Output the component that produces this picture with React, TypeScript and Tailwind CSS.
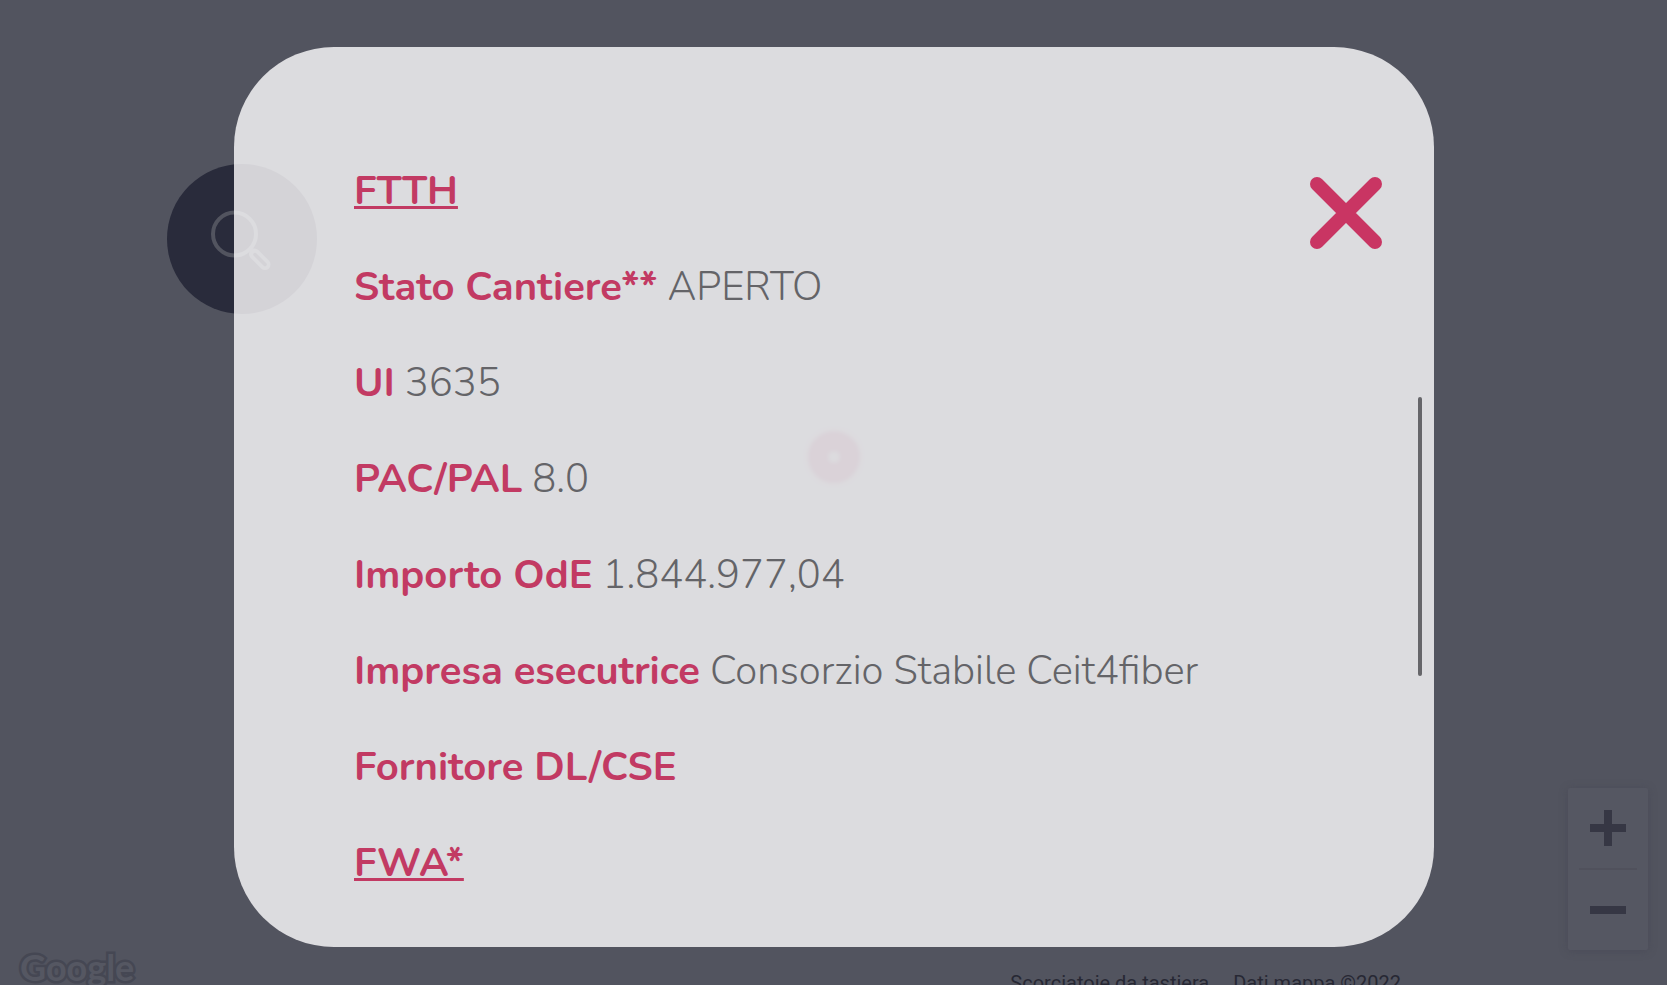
import React from "react";

type Row = { label: string; value?: string; heading?: boolean };

const rows: Row[] = [
  { label: "FTTH", heading: true },
  { label: "Stato Cantiere**", value: "APERTO" },
  { label: "UI", value: "3635" },
  { label: "PAC/PAL", value: "8.0" },
  { label: "Importo OdE", value: "1.844.977,04" },
  { label: "Impresa esecutrice", value: "Consorzio Stabile Ceit4fiber" },
  { label: "Fornitore DL/CSE" },
  { label: "FWA*", heading: true },
];

function MapLayer() {
  return (
    <div className="absolute inset-0">
      <button
        aria-label="Cerca"
        className="absolute left-[167px] top-[164px] size-[150px] rounded-full bg-[#292b3b]"
      >
        <svg viewBox="0 0 150 150" fill="none" stroke="#52545f" className="size-full">
          <circle cx="67.500" cy="70" r="21.500" strokeWidth="4" />
          <path d="M83 84l3 3" strokeWidth="4" />
          <path d="M87.500 90l10.500 10.500" strokeWidth="11" strokeLinecap="round" />
          <path d="M88 90.500l10 10" stroke="#292b3b" strokeWidth="3.500" strokeLinecap="round" />
        </svg>
      </button>

      <div className="absolute left-1/2 top-[431px] size-[52px] -translate-x-1/2 rounded-full border-[20px] border-[#46233c] blur-[2px]" />

      <div className="absolute bottom-[35px] right-[19px] flex w-20 flex-col items-center rounded-xs bg-[#555762] shadow-[0_1px_8px_rgba(60,61,75,0.350)]">
        <button aria-label="Zoom avanti" className="flex h-20 w-full items-center justify-center">
          <svg viewBox="0 0 36 36" className="size-9" fill="#363744">
            <path d="M14 0h8v14h14v8H22v14h-8V22H0v-8h14z" />
          </svg>
        </button>
        <div className="h-0.5 w-[58px] bg-[#50515c]" />
        <button aria-label="Zoom indietro" className="flex h-20 w-full items-center justify-center">
          <svg viewBox="0 0 36 36" className="size-9" fill="#363744">
            <path d="M0 14h36v8H0z" />
          </svg>
        </button>
      </div>

      <a
        href="#google"
        className="absolute -bottom-1 left-5 font-['Lato',sans-serif] text-[36px] leading-[44px] font-bold text-[#555762] [-webkit-text-stroke:5px_#454753] [paint-order:stroke_fill]"
      >
        Google
      </a>
      <div className="absolute -bottom-2.5 right-[266px] flex gap-6 font-['Roboto',sans-serif] text-[20px] leading-6 text-[#272834]">
        <a href="#tastiera">Scorciatoie da tastiera</a>
        <span>Dati mappa ©2022</span>
      </div>
    </div>
  );
}

export default function App() {
  return (
    <main className="relative flex h-screen flex-col items-center overflow-hidden bg-[#52545f] pt-[47px] pl-px">
      <MapLayer />
      <section
        role="dialog"
        aria-label="Dettagli cantiere"
        className="relative flex w-[90%] max-w-[1200px] items-start rounded-[100px] bg-[#fffeff]/80 pt-24 pr-[52px] pb-9 pl-[120px]"
      >
        <dl className="min-w-0 flex-1 font-['Nunito','Lato',sans-serif] text-[40px] leading-[96px]">
          {rows.map((row) => (
            <div key={row.label} className="flex gap-2.5">
              <dt
                className={
                  row.heading
                    ? "font-bold text-[#c23a63] underline decoration-3 underline-offset-2"
                    : "font-bold text-[#c23a63]"
                }
              >
                {row.label}
              </dt>
              {row.value && <dd className="font-light text-[#646468]">{row.value}</dd>}
            </div>
          ))}
        </dl>
        <button aria-label="Chiudi" className="mt-[34px]">
          <svg viewBox="0 0 72 72" className="size-[72px]" stroke="#c93563" strokeWidth="14" strokeLinecap="round">
            <path d="M7 7l58 58M65 7L7 65" />
          </svg>
        </button>
        <div className="absolute right-3 top-[350px] h-[279px] w-1 rounded-full bg-[#66666a]" />
      </section>
    </main>
  );
}
